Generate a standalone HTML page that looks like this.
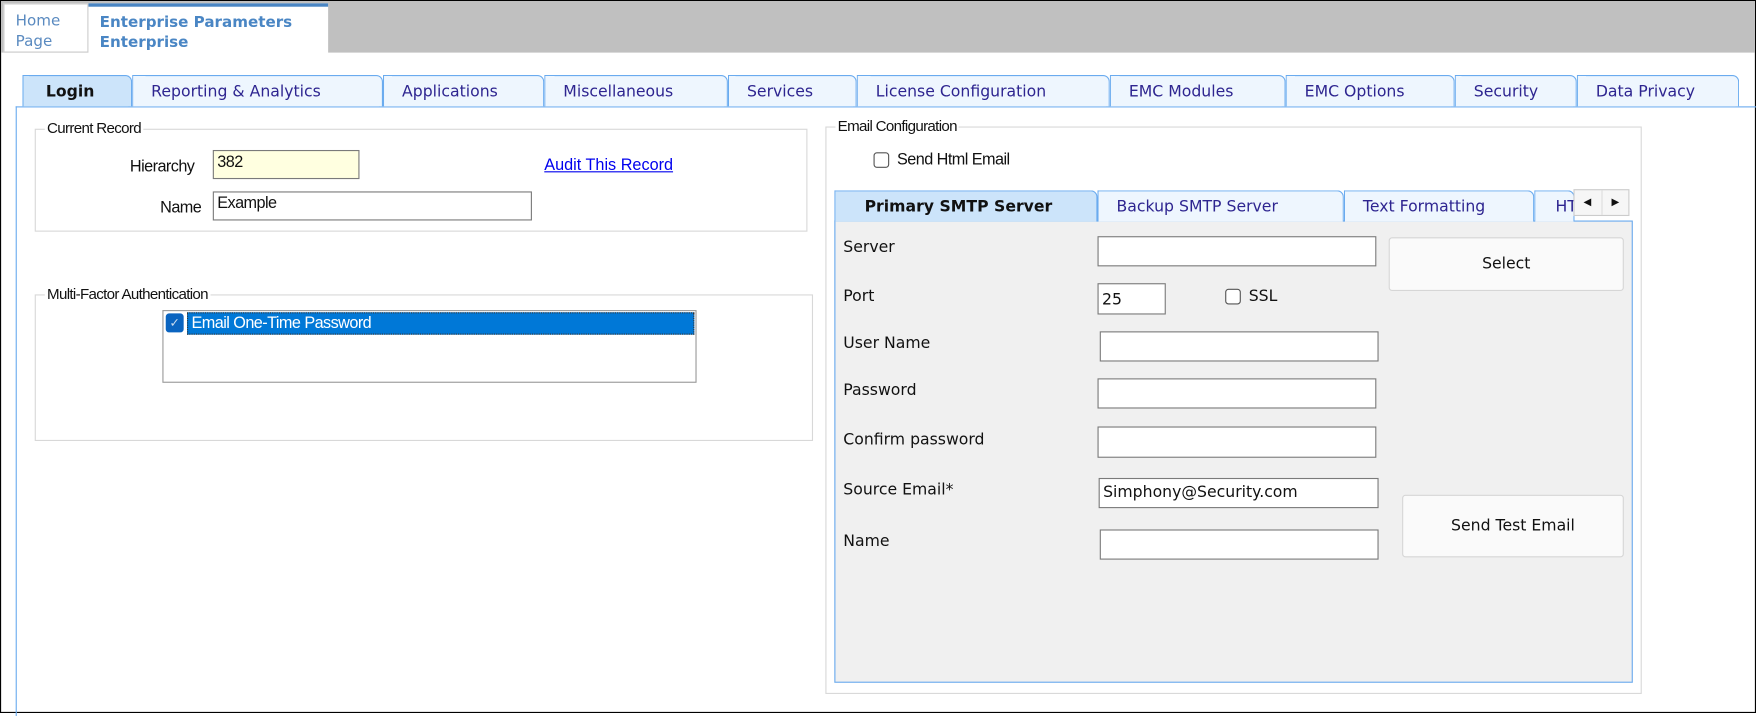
<!DOCTYPE html>
<html><head><meta charset="utf-8"><style>
*{box-sizing:border-box;margin:0;padding:0}
html,body{width:1756px;height:713px;overflow:hidden;background:#fff}
#w{position:absolute;left:0;top:0;width:1568px;height:637px;transform:scale(1.11990,1.11931);transform-origin:0 0;font-family:"DejaVu Sans","Liberation Sans",sans-serif;font-size:13px;color:#111}
.a{position:absolute}
.tab{position:absolute;height:28px;background:#eef6fe;border:1px solid #6aabef;border-bottom:none;border-radius:0 6px 0 0;color:#2e2590;font-size:14px;padding:6px 0 0 16px;white-space:nowrap;overflow:hidden}
.sel{background:#cce4fa;color:#111;font-weight:bold}
.grp{position:absolute;border:1px solid #d8d8d8}
.gl{position:absolute;top:-9px;left:8px;background:#fff;padding:0 2px;font-family:"Liberation Sans",sans-serif;font-size:13.5px;letter-spacing:-0.6px;color:#111}
.in{position:absolute;background:#fff;border:1px solid #7a7a7a;font-size:14px;padding:4px 3px;font-family:"DejaVu Sans",sans-serif}
.lb{position:absolute;font-size:14px}
.btn{position:absolute;background:#fafafa;border:1px solid #d6d6d6;border-radius:3px;font-size:14px;text-align:center}
.cb{position:absolute;width:14px;height:14px;border:1px solid #555;border-radius:3px;background:#fff}
.nl{font-family:"Liberation Sans",sans-serif;letter-spacing:-0.5px;font-size:14.5px}
</style></head><body><div id="w">
<div class="a" style="left:0;top:0;width:1568px;height:637px;border:1px solid #000"></div>
<div class="a" style="left:1px;top:1px;width:1566px;height:46px;background:#c0c0c0"></div>
<div class="a" style="left:3px;top:3px;width:76px;height:44px;background:#fff;border:1px solid #ccc;color:#5a8ac0;font-size:13.5px;line-height:18px;padding:6px 0 0 10px">Home<br>Page</div>
<div class="a" style="left:79px;top:3px;width:214px;height:45px;background:#fff;border-top:3px solid #4a86c4;color:#4a86c4;font-weight:bold;font-size:13.5px;line-height:18px;padding:5px 0 0 10px">Enterprise Parameters<br>Enterprise</div>
<div class="a" style="left:14px;top:95px;width:1554px;height:545px;border-left:1px solid #6aabef;border-top:1px solid #6aabef"></div>
<div class="tab sel" style="left:20px;top:67px;width:98px;padding-left:20px">Login</div>
<div class="tab" style="left:118px;top:67px;width:224px">Reporting &amp; Analytics</div>
<div class="tab" style="left:342px;top:67px;width:144px">Applications</div>
<div class="tab" style="left:486px;top:67px;width:164px">Miscellaneous</div>
<div class="tab" style="left:650px;top:67px;width:115px">Services</div>
<div class="tab" style="left:765px;top:67px;width:226px">License Configuration</div>
<div class="tab" style="left:991px;top:67px;width:157px">EMC Modules</div>
<div class="tab" style="left:1148px;top:67px;width:151px">EMC Options</div>
<div class="tab" style="left:1299px;top:67px;width:109px">Security</div>
<div class="tab" style="left:1408px;top:67px;width:145px">Data Privacy</div>
<div class="grp" style="left:31px;top:115px;width:690px;height:92px"><span class="gl">Current Record</span></div>
<div class="lb nl" style="left:116px;top:141px">Hierarchy</div>
<div class="in nl" style="left:190px;top:134px;width:131px;height:26px;background:#ffffe0;padding:2px 3px">382</div>
<div class="lb" style="left:486px;top:140px;color:#0000ee;text-decoration:underline;font-family:'Liberation Sans',sans-serif;font-size:14.5px">Audit This Record</div>
<div class="lb nl" style="left:143px;top:178px">Name</div>
<div class="in nl" style="left:190px;top:171px;width:285px;height:26px;padding:2px 3px">Example</div>
<div class="grp" style="left:31px;top:263px;width:695px;height:131px"><span class="gl">Multi-Factor Authentication</span></div>
<div class="a" style="left:145px;top:277px;width:477px;height:65px;border:1px solid #999;background:#fff"></div>
<div class="a" style="left:148px;top:280px;width:16px;height:17px;background:#0a64c0;border-radius:3px;color:#cde;font-size:11px;text-align:center;line-height:17px">✓</div>
<div class="a nl" style="left:167px;top:279px;width:453px;height:20px;background:#0078d7;color:#fff;border:1px dotted #333;padding:0 3px;line-height:18px">Email One-Time Password</div>
<div class="grp" style="left:737px;top:113px;width:729px;height:507px"><span class="gl">Email Configuration</span></div>
<div class="cb" style="left:780px;top:136px"></div>
<div class="lb nl" style="left:801px;top:135px">Send Html Email</div>
<div class="a" style="left:745px;top:197px;width:713px;height:413px;background:#f0f0f0;border:1px solid #6aabef"></div>
<div class="tab sel" style="left:745px;top:170px;width:235px;height:28px;padding-left:26px">Primary SMTP Server</div>
<div class="tab" style="left:980px;top:170px;width:220px;height:28px">Backup SMTP Server</div>
<div class="tab" style="left:1200px;top:170px;width:170px;height:28px">Text Formatting</div>
<div class="tab" style="left:1370px;top:170px;width:36px;height:28px;padding-left:18px">HT</div>
<div class="a" style="left:1405px;top:169px;width:50px;height:24px;background:#f6f6f6;border:1px solid #ccc;font-size:9px;line-height:22px"><span style="position:absolute;left:8px">◀</span><span style="position:absolute;left:24px;top:0;height:22px;border-left:1px solid #ddd"></span><span style="position:absolute;left:33px">▶</span></div>
<div class="lb" style="left:753px;top:213px">Server</div>
<div class="in" style="left:980px;top:211px;width:249px;height:27px"></div>
<div class="btn" style="left:1240px;top:212px;width:210px;height:48px;line-height:46px">Select</div>
<div class="lb" style="left:753px;top:257px">Port</div>
<div class="in" style="left:980px;top:253px;width:61px;height:28px;padding-top:6px">25</div>
<div class="cb" style="left:1094px;top:258px"></div>
<div class="lb" style="left:1115px;top:257px">SSL</div>
<div class="lb" style="left:753px;top:299px">User Name</div>
<div class="in" style="left:982px;top:296px;width:249px;height:27px"></div>
<div class="lb" style="left:753px;top:341px">Password</div>
<div class="in" style="left:980px;top:338px;width:249px;height:27px"></div>
<div class="lb" style="left:753px;top:385px">Confirm password</div>
<div class="in" style="left:980px;top:381px;width:249px;height:28px"></div>
<div class="lb" style="left:753px;top:430px">Source Email*</div>
<div class="in" style="left:981px;top:427px;width:250px;height:27px;padding-top:4px">Simphony@Security.com</div>
<div class="btn" style="left:1252px;top:442px;width:198px;height:56px;line-height:54px">Send Test Email</div>
<div class="lb" style="left:753px;top:476px">Name</div>
<div class="in" style="left:982px;top:473px;width:249px;height:27px"></div>
</div></body></html>
